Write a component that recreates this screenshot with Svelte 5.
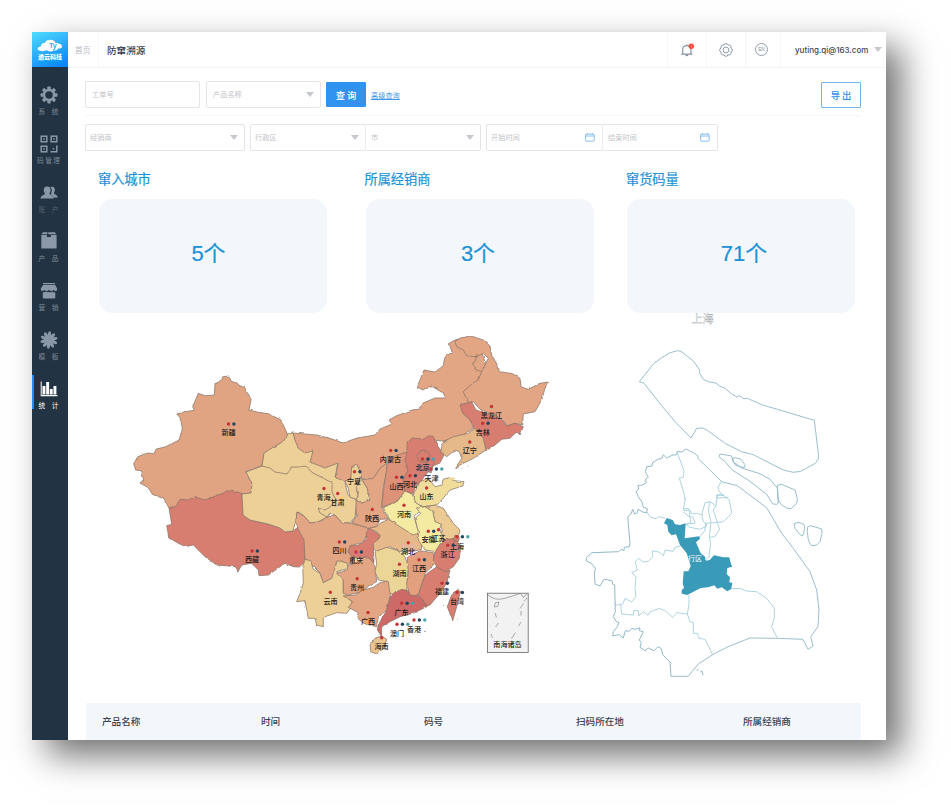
<script>
  // Outlines are kept in thirds of a pixel, relative to the tile origin [ox, oy].
  const W = [125, 365], N = [280, 420], S = [280, 530], NE = [400, 330], E = [400, 460], P = null;
  const path = (o, s, close = true) => {
    const n = s.trim().split(/[\s,]+/).map(Number);
    let d = '';
    for (let i = 0; i < n.length; i += 2) {
      const x = o ? o[0] + n[i] / 3 : n[i];
      const y = o ? o[1] + n[i + 1] / 3 : n[i + 1];
      d += (i ? 'L' : 'M') + x.toFixed(1) + ' ' + y.toFixed(1);
    }
    return d + (close ? 'Z' : '');
  };
  const provinces = [
    [P, '#e2a684', '448,344 455,340 465,338 480,345 490,380 468,403 461,405 463,413 470,420 474,428 460,437 443,441 432,440 412,440 408,446 408,454 398,456 387,464 380,469 374,479 365,480 357,474 352,478 343,482 335,479 338,464 325,469 309,463 312,452 305,454 297,449 293,433 305,434 317,435 332,439 343,443 357,438 375,435 380,429 392,424 389,420 396,416 412,410 420,409 423,403 435,398 446,398 443,393 433,387 428,387 423,390 417,387 424,370 435,372 443,366 445,357 452,352 450,346'],
    [W, '#e0a482', '293,35 312,33 318,48 335,55 345,62 360,68 366,82 379,100 372,135 400,142 430,146 468,165 487,206 478,228 462,238 440,250 418,265 410,302 362,320 382,358 378,385 350,387 320,378 285,390 240,407 208,397 190,407 165,405 152,430 132,430 118,402 82,388 70,368 46,355 56,348 50,318 32,315 26,296 38,275 68,264 86,266 94,252 120,246 162,225 172,190 165,158 155,147 180,140 208,136 203,125 220,85 240,92 268,90 270,55 290,45'],
    [W, '#d77e71', '350,385 320,376 285,388 240,405 208,395 190,405 165,403 152,428 132,430 140,478 125,482 132,520 180,545 205,540 240,575 275,600 335,605 338,622 350,600 380,595 400,615 402,632 430,630 480,595 505,605 523,606 540,590 540,525 520,485 505,498 480,500 465,488 430,478 375,465 355,450'],
    [P, '#ecd097', '262,466 246,472 252,484 251,493 242,494 243,515 250,520 268,524 280,528 285,532 293,531 296,520 297,512 300,513 305,517 310,523 318,522 327,518 340,500 332,480 305,462 285,462'],
    [P, '#ecd097', '287,434 284,441 279,444 272,448 264,453 262,466 270,468 275,472 287,474 292,467 300,467 305,466 313,473 323,478 332,483 332,492 336,500 330,507 325,510 318,508 320,513 327,517 330,513 335,515 342,523 350,523 355,517 357,500 348,495 345,482 335,477 338,463 325,468 310,462 313,451 305,453 298,448 295,440 293,433'],
    [N, '#ecd097', '215,140 230,132 238,150 245,165 240,195 230,210 235,230 228,238 210,232 205,205 195,183 212,178'],
    [N, '#ecd097', '240,170 262,205 270,240 245,250 228,240 235,225 230,210'],
    [N, '#e2a684', '320,130 300,145 280,175 255,178 246,178 262,205 270,240 245,250 228,240 228,290 215,308 265,325 290,320 300,298 325,297 305,260 310,200 322,150'],
    [N, '#dd9379', '385,95 350,105 322,135 312,200 305,262 350,245 375,215 370,180 385,150 382,120'],
    [P, '#e2a684', '296,520 297,512 305,517 310,523 318,522 325,518 335,515 342,523 350,523 357,525 368,528 367,537 360,543 350,546 348,552 355,558 347,565 341,561 336,563 335,577 323,583 320,573 310,563 305,560 304,540 298,529'],
    [S, '#ecd097', '75,88 92,92 100,118 120,130 130,158 155,145 172,92 200,98 205,115 170,125 190,150 190,185 215,210 215,230 200,250 170,248 150,255 130,262 130,290 110,285 105,265 85,265 80,240 75,212 50,215 60,190 70,160 68,110'],
    [S, '#e2a684', '205,105 230,100 245,85 262,80 275,90 285,110 290,155 270,165 245,185 205,195 190,190 190,150 170,130 200,120'],
    [S, '#e2a684', '190,198 225,195 250,180 280,172 300,158 325,152 335,175 330,200 320,240 295,262 290,290 250,280 230,262 235,248 205,232 218,215'],
    [N, '#e6b98a', '300,310 325,298 360,318 400,325 425,358 425,388 395,395 360,395 330,380 290,395 270,375 300,350 290,335 265,325 290,320'],
    [S, '#d77e71', '268,-5 300,15 298,25 280,40 282,98 262,80 240,85 215,80 205,65 210,48 235,45 262,25 258,10'],
    [S, '#ecd697', '285,65 320,52 355,62 375,80 385,110 380,180 345,195 330,190 325,155 295,150 285,125 290,100'],
    [P, '#d77e71', '407,452 407,443 412,438 424,439 428,436 433,436 437,445 444,455 440,463 433,466 428,472 422,480 415,488 413,494 405,491 403,480 408,470 405,460'],
    [NE, '#d77e71', '50,380 60,362 75,360 92,375 85,392 60,395'],
    [NE, '#d77e71', '88,388 102,393 98,410 94,428 84,425 80,400'],
    [E, '#f1dd9b', '40,105 60,65 85,55 105,80 125,75 130,58 145,53 165,62 192,65 188,78 150,90 125,120 110,135 70,140 45,130'],
    [P, '#f4eaa1', '383,507 397,502 405,491 412,494 416,503 424,508 414,516 417,527 419,533 413,535 402,528 390,520'],
    [E, '#ebca93', '70,142 105,135 130,145 160,190 180,210 175,230 150,240 130,240 125,200 105,185 98,155'],
    [E, '#f4eaa1', '50,145 75,140 98,155 105,185 125,193 118,203 128,225 126,245 110,275 75,270 55,240 55,215 45,175 62,160'],
    [NE, '#e2a684', '180,24 212,18 250,30 270,48 275,75 295,110 298,125 335,130 360,145 363,170 385,178 420,160 445,156 435,175 425,210 405,245 370,252 368,285 345,280 322,288 308,270 290,258 240,238 220,215 205,218 190,185 218,160 235,150 245,125 265,85 250,70 230,80 200,78 190,60 170,50 165,35'],
    [NE, '#d77e71', '180,225 205,218 215,215 228,240 290,260 310,275 320,288 345,280 370,290 360,315 350,305 330,325 305,328 285,345 258,362 245,320 225,295 210,270 188,250'],
    [NE, '#e6b98a', '125,350 130,335 160,320 205,310 225,295 250,325 258,360 220,385 180,405 165,415 185,385 178,365 165,360 140,380 122,365'],
    [E, '#e2a07f', '22,292 60,272 100,278 105,310 75,340 55,405 30,410 20,370 25,340'],
    [E, '#d77e71', '105,275 128,240 165,235 182,262 178,295 160,320 135,335 112,325 100,300'],
    [E, '#d77e71', '110,320 135,335 150,330 140,370 120,400 90,435 75,440 55,405 75,345'],
    [S, '#cd6a67', '340,190 365,178 385,182 390,195 415,198 430,210 440,230 400,250 360,260 330,275 305,290 305,320 292,300 295,285 320,240 330,205'],
    [S, '#ebc48f', '270,345 285,325 305,318 320,328 312,355 290,372 272,365'],
    [E, '#d77e71', '175,388 180,400 170,440 158,482 142,440 155,405'],
    [E, '#d77e71', '165,225 180,230 175,245 160,240']
  ].map(([o, fill, s]) => ({ fill, d: path(o, s) }));
  const innerLine = path(NE, '232,72 225,95 218,103 225,118 245,125', false);

  // name, centre x, centre y, first dot x, dot y, number of dots
  const labels = [
    ['新疆', 228.5, 433, 228.5, 424, 2], ['西藏', 252, 560, 252, 551, 2], ['内蒙古', 390.5, 460, 390.7, 450.5, 2],
    ['宁夏', 354, 481.5, 354.5, 471.8, 2], ['青海', 323.5, 497.5, 324, 488.5, 1], ['甘肃', 337.5, 502.5, 337.7, 493.5, 1],
    ['陕西', 372, 519, 372.3, 509.5, 1], ['山西', 396.5, 486.5, 396.5, 477.3, 2], ['河北', 410, 484.5, 410, 475.7, 2],
    ['河南', 404, 514.5, 404, 505.3, 1], ['四川', 339.5, 551, 339.3, 542, 2], ['重庆', 356, 561, 356, 552, 2],
    ['贵州', 357, 588, 357.2, 578.8, 1], ['云南', 330.5, 602, 330.3, 592.3, 1], ['广西', 368, 621.5, 368, 612.5, 1],
    ['广东', 401.5, 612.5, 401.7, 603.3, 3], ['澳门', 397, 633.5, 397, 624.3, 3], ['香港', 414, 629.5, 414, 620, 3],
    ['海南', 381.5, 646.5, 381.7, 637.7, 1], ['湖南', 399.5, 573.5, 399.5, 564.2, 1], ['江西', 419, 569, 419, 559.8, 2],
    ['湖北', 408, 552, 408.3, 542.7, 1], ['黑龙江', 491.5, 415.5, 491.5, 406.5, 1], ['吉林', 482.7, 432.3, 482.7, 423.3, 2],
    ['辽宁', 469.8, 451, 469.8, 442, 1], ['北京', 422.5, 468, 422.5, 459, 3], ['天津', 431.5, 478.3, 431, 469, 3],
    ['山东', 426.5, 497, 426.6, 488, 1], ['安徽', 428.5, 540, 428.3, 531.3, 2], ['江苏', 438.5, 539, 438.5, 529.7, 1],
    ['上海', 457, 546.5, 457, 536.8, 3], ['浙江', 447.7, 554.3, 447.8, 545.3, 2], ['福建', 442, 592, 442, 583.3, 2],
    ['台湾', 457, 601.5, 457, 592.5, 2]
  ];
  const dotColors = ['#c73434', '#24435c', '#4aa3a8'];

  const A = [580, 310], B = [580, 490];
  const coast = [
    path(A, '178,215 222,160 245,143 270,128 293,122 303,124 340,153 359,180 359,190 370,208 388,216 408,219 420,229 435,235 455,252 470,260 478,257 492,266 502,265 545,284 703,331 715,430 715,447 706,460 662,484 640,487 610,480 520,434 485,425 437,401 382,361 368,354 350,355 333,384 285,335 245,287 192,220'),
    path(A, '456,447 466,443 482,447 495,464 494,472 482,471 466,465'),
    path(A, '571,570 560,553 510,514 457,480 435,455 417,440 420,432 455,438 460,456 485,474 540,491 570,508 592,534 595,580 590,583 578,582'),
    path(A, '592,526 605,523 645,540 652,565 650,580 633,596 622,595 605,585 595,570'),
    path(B, '643,101 654,97 672,103 674,116 668,138 660,134 645,115'),
    path(B, '683,110 692,107 725,117 726,130 720,155 710,165 694,167 685,150 682,125'),
    path(A, '318,417 340,428 353,437 355,446 425,515 472,527 560,593 605,670 640,715 690,785 710,840 717,900 714,950 692,980 699,1008 684,1018 668,988 592,985 510,984 440,1012 398,1034 355,1062 325,1099 273,1099', false)
  ];
  const westBorder = path(A, '273,1099 270,1056 248,1034 244,1016 234,1010 222,1022 205,1014 195,1022 180,1012 184,998 178,990 190,965 178,962 180,954 165,958 155,955 148,964 136,962 130,984 118,974 98,978 100,965 112,950 117,938 108,934 100,920 106,905 104,825 98,823 96,812 72,808 60,828 45,822 43,792 46,775 34,760 18,752 20,742 36,728 115,725 124,718 132,722 133,712 148,710 150,700 143,620 153,612 158,598 164,612 172,608 174,598 188,606 200,608 202,596 190,592 186,576 176,562 168,545 176,538 174,526 185,526 200,518 195,510 205,502 196,485 200,470 216,468 218,458 235,447 245,446 250,434 260,444 275,436 290,434 292,424 305,426 318,417', false);
  const inner = [
    path(A, '292,428 300,450 312,482 310,502 298,505 312,550 316,570', false),
    path(A, '316,565 310,600 330,602 328,620 340,622 345,640 320,642', false),
    path(A, '425,513 414,532 418,545 432,557 410,555 410,565 445,562', false),
    path(B, '200,66 212,82 228,86 235,80 256,84', false),
    path(B, '310,58 325,55 335,72 350,70 365,75 375,38 390,35 408,48 412,15 425,12 448,30 455,70 430,95 400,98 378,100 380,108 360,118 330,112 318,103 333,98 330,82 308,65', false),
    path(B, '365,72 370,95 378,100 374,122 360,140', false),
    path(B, '408,48 400,60 412,98 419,118 404,140 388,142 392,160 386,205', false),
    path(B, '390,35 385,60 393,97 388,142', false),
    path(B, '303,167 285,172 280,184 255,180 250,198 240,187 217,182 218,200 205,214 190,216 175,205 166,215 172,240 155,248 168,260 165,295 168,320 155,336 135,325 130,340 122,345 125,372 160,375 162,360 175,362 176,378 190,365 204,376 210,366 238,355 255,362 278,382 290,368 322,372', false),
    path(B, '327,315 327,345 322,372 330,395 340,397 340,430 352,430 357,445 375,448 398,494', false),
    path(B, '455,296 480,295 500,303 530,305 560,325 583,355 583,385 575,410 591,443', false),
    path(B, '104,338 110,346 124,342', false)
  ];
  const minhang = path(B, '260,84 278,90 285,103 300,105 317,100 314,145 358,139 360,146 348,157 362,190 375,200 378,212 389,210 402,196 430,202 448,202 453,222 457,230 442,234 440,252 450,262 448,277 457,278 454,297 442,304 425,292 412,296 403,286 385,292 362,294 322,315 305,311 305,300 312,294 308,280 311,244 325,244 332,228 320,190 300,165 288,133 275,136 265,125 262,105 252,100');

  const menu = [
    { icon: 'gear', text: '系　统' }, { icon: 'qr', text: '码 管 理' }, { icon: 'users', text: '账　户', dim: true },
    { icon: 'box', text: '产　品' }, { icon: 'shop', text: '营　销' }, { icon: 'flower', text: '模　板' },
    { icon: 'chart', text: '统　计', active: true }
  ];
  const stats = [['窜入城市', '5', 9], ['所属经销商', '3', 3], ['窜货码量', '71', -6]];
  const columns = [['产品名称', 159], ['时间', 163], ['码号', 152], ['扫码所在地', 167], ['所属经销商', 100]];
</script>

{#snippet caret()}<i class="caret"></i>{/snippet}
{#snippet calendar()}
  <svg class="cal" width="10" height="9" viewBox="0 0 10 9" fill="none" stroke="#7db8ee"><rect x=".6" y="1.1" width="8.6" height="7" rx=".5" stroke-width=".9" /><path d="M.6 3h8.6M2.5 0v1.5M7.3 0v1.5" stroke-width=".9" /></svg>
{/snippet}

<div class="stage">
  <div class="window">
    <aside>
      <div class="logo">
        <svg width="26" height="14" viewBox="0 0 26 14"><path d="M3 11.8C-.5 11.5 0 7.5 4 7.4 3.8 4.8 6 3.500 7.800 4 9-.3 17-.6 18.500 4c4 .2 7.500 2 6.300 4.200-.7 1.500-2.800 1.200-4 1.200.2 2-2.600 2.700-4.200 1.500-1 2-5.500 2-7 .2-1.800 1.300-4.500 1.300-6.600.7Z" fill="#fff" /><text x="12" y="8.600" font-size="7" font-weight="700" fill="#26a4f4" font-family="Liberation Sans, sans-serif">Ty</text></svg>
        <span>透云科技</span>
      </div>
      {#each menu as m}
        <div class="item" class:active={m.active} class:dim={m.dim}>
          <svg width="18" height="20" viewBox="0 0 18 20" fill="currentColor">
            {#if m.icon === 'gear'}
              <circle cx="9" cy="10" r="5" fill="none" stroke="currentColor" stroke-width="2.500" />
              {#each [0, 45, 90, 135, 180, 225, 270, 315] as a}<rect x="7.300" y="1.500" width="3.400" height="3.500" rx=".8" transform="rotate({a} 9 10)" />{/each}
            {:else if m.icon === 'qr'}
              <g fill="none" stroke="currentColor" stroke-width="1.500"><rect x="1.200" y="2.200" width="5.600" height="5.600" /><rect x="11.200" y="2.200" width="5.600" height="5.600" /><rect x="1.200" y="12.200" width="5.600" height="5.600" /><path d="M16.800 11.500v6.300h-6.300" /></g>
              <path d="M3.200 4.200h1.600v1.600H3.200zM13.200 4.200h1.600v1.600h-1.600zM3.200 14.200h1.600v1.600H3.200zM12.600 14h1.600v1.600h-1.600z" />
            {:else if m.icon === 'users'}
              <path d="M10.500 4c3-1.200 5 1 4.300 4-.3 1.400-1.300 2-.8 2.600.8 1 3.500 1.400 3.800 4h-4.300c-.5-2-2-2.700-3-3.300 1.500-2 2-5 0-7.300Z" /><path d="M7.200 3.600c2.600 0 3.800 2 3.300 4.300-.3 1.500-1.400 2.300-1 3 .7 1.100 4 1.300 4.300 4.700H.5c.3-3.400 3.600-3.600 4.300-4.700.4-.7-.7-1.500-1-3-.5-2.300.8-4.300 3.400-4.300Z" />
            {:else if m.icon === 'box'}
              <path d="M3 .2h4.600l-.4 2.100H1.400ZM8.400.2h6.400l1.600 2.100H8.200ZM1.300 3h5.600v1.900h4V3h5.700v13q0 .6-.6.6H2q-.7 0-.7-.6Z" />
            {:else if m.icon === 'shop'}
              <path d="M3 2h12v1.300H3zM3 4h12.200l2 3.800q.2 2.200-1.500 2.200-1.400 0-1.900-1.300-.7 1.300-2.300 1.300T9 8.700Q8.200 10 6.600 10T4.200 8.700Q3.600 10 2.300 10 .6 10 .8 7.800ZM2.800 11.200q2 .3 3.300-.7Q8 12 9 10.700q1.500 1.200 3 0 1.500.9 3.300.6v5.400q0 .8-.8.800H3.600q-.8 0-.8-.8Z" />
            {:else if m.icon === 'flower'}
              {#each Array(10) as _, i}<ellipse cx="9" cy="4.900" rx="1.600" ry="3.600" transform="rotate({i * 36 + 5} 9 10)" />{/each}
              <path d="M9 7.500 11.400 9.500 10.500 12.300H7.500L6.600 9.500Z" />
            {:else}
              <path d="M.7 2.500h1V16h15.800v1.200H.7ZM2.500 7h2.900v8.500H2.500zM6.200 3h2.900v12.500H6.200zM9.800 10h2.900v5.500H9.800zM13.500 7h2.900v8.500h-2.900z" />
            {/if}
          </svg>
          <span>{m.text}</span>
        </div>
      {/each}
    </aside>
    <main>
      <header>
        <span class="home">首页</span><span class="title">防窜溯源</span>
        <div class="cell"><svg width="16" height="16" viewBox="0 0 16 16" fill="none" stroke="#8795a5" stroke-width="1.200"><path d="M2.300 12.200h11M3.700 12V7.800q0-4.200 4.100-4.200T11.900 7.800V12M7.800 3.600V2.400M6.600 12.500q1.200 2.400 2.400 0" /><circle cx="12.300" cy="4.300" r="2.700" fill="#ff4438" stroke="none" /><path d="M12.300 3v2.500" stroke="#ffb0a8" stroke-width=".7" /></svg></div>
        <div class="cell"><svg width="14" height="14" viewBox="0 0 14 14" fill="none" stroke="#8f9daa"><path d="M5.600.9Q7 .2 8.400.9L9 2.200 10.500 1.900Q12 2.500 12.100 3.900L11.700 5 13.100 5.900Q13.600 7.300 13 8.500L11.700 9.100 12 10.500Q11.500 12 10.100 12L8.900 11.700 8.300 13Q7 13.600 5.700 13L5.100 11.700 3.900 12Q2.500 11.800 2 10.500L2.300 9.100 1 8.500Q.4 7.300.9 5.900L2.300 5 1.900 3.900Q2.300 2.300 3.700 1.900L5 2.200Z" stroke-width="1" stroke-linejoin="round" /><circle cx="7" cy="7" r="2.900" /></svg></div>
        <div class="cell en"><b>EN</b></div>
        <div class="user">yuting.qi@163.com{@render caret()}</div>
      </header>
      <section class="filters">
        <div class="row first">
          <div class="input w115">工单号</div>
          <div class="input w115 gap">产品名称{@render caret()}</div>
          <button class="query">查 询</button>
          <a href="#more">高级查询</a>
          <button class="export">导 出</button>
        </div>
        <div class="row second">
          <div class="input" style:width="160px">经销商{@render caret()}</div>
          <div class="input next" style:width="116px">行政区{@render caret()}</div>
          <div class="input join" style:width="116px">市{@render caret()}</div>
          <div class="input next" style:width="117px">开始时间{@render calendar()}</div>
          <div class="input join" style:width="116px">结束时间{@render calendar()}</div>
        </div>
      </section>
      <section class="stats">
        {#each stats as [name, value, inset]}
          <div class="stat"><h2>{name}</h2><div class="card"><span style:margin-right="{inset}px">{value}个</span></div></div>
        {/each}
      </section>
      <svg class="maps" width="818" height="391" viewBox="68 312 818 391">
        <defs>
          <filter id="rough" x="0" y="0" width="100%" height="100%"><feTurbulence type="fractalNoise" baseFrequency="0.2" numOctaves="1" seed="4" /><feDisplacementMap in="SourceGraphic" scale="2.600" xChannelSelector="R" yChannelSelector="G" /></filter>
        </defs>
        <g stroke="#8a7467" stroke-width=".75" stroke-linejoin="round" filter="url(#rough)">
          {#each provinces as p}<path d={p.d} fill={p.fill} />{/each}
          <path d={innerLine} fill="none" />
        </g>
        <g fill="#99968c"><circle cx="425" cy="631.500" r=".8" /><circle cx="443.500" cy="605.500" r=".6" /><circle cx="468" cy="466" r=".5" /><circle cx="462" cy="468" r=".5" /><circle cx="457.500" cy="619" r=".5" /><path d="M448 479l4-2 4 1.500-3 1.500Z" fill="#f1dd9b" /></g>
        <g fill="none" stroke="#777" stroke-width=".6">
          <rect x="487.500" y="593.200" width="40.700" height="59.300" fill="#f2f2f2" stroke="#666" stroke-width=".8" />
          <path d="M488 595q7 6 16 3.500t16-5M520.500 593.500l3 4 3.500-4M495 603l4-1-1.500 4.500-3 .5ZM495 613l1.500 4.500M498.500 623l-3 4M491 634l1.500 4M527 598l-3 3.500M523.500 603.500l-3.500 5M521 611v4.500M521 622l-2.500 4M515.500 632.500l-4 6" />
        </g>
        {#each labels as [name, x, y, dx, dy, n]}
          {#each dotColors.slice(0, n) as c, i}<circle cx={dx + i * 5.400} cy={dy} r="1.700" fill={c} />{/each}
          <text x={x} y={y + 2.400} class="place">{name}</text>
        {/each}
        <text x="507.500" y="646.800" class="place">南海诸岛</text>
        <g fill="none" stroke-linejoin="round" stroke-width=".9">
          {#each inner as d}<path {d} stroke="#a5cfdc" />{/each}
          {#each coast as d}<path {d} stroke="#8fb8c8" />{/each}
          <path d={westBorder} stroke="#86b2c2" />
          <path d="M697 671l1-2M700 672l2-1 1 4" stroke="#8fb8c8" />
        </g>
        <path d={minhang} fill="#3a9bb9" />
        <clipPath id="district"><path d={minhang} /></clipPath>
        <text x="691.500" y="561.300" class="place district" clip-path="url(#district)">闵行区</text>
        <circle cx="706.500" cy="558.500" r="1.500" fill="#d8eef5" />
        <text x="702.500" y="323" class="city">上海</text>
      </svg>
      <div class="table">
        {#each columns as [name, w]}<span style:width="{w}px">{name}</span>{/each}
      </div>
    </main>
  </div>
</div>

<style>
  :global(body) { background: #fff; }
  .stage { width: 951px; height: 805px; padding: 32px; box-sizing: border-box; overflow: hidden; background: #fff; font-family: "Noto Sans CJK SC", sans-serif; }
  .window { width: 854px; height: 708px; display: flex; background: #fff; box-shadow: 15px 15px 33px rgba(0, 0, 0, .57); }
  aside { width: 36px; flex: none; background: #223343; }
  .logo { height: 35px; margin-bottom: 3px; background: linear-gradient(155deg, #4edcfc, #0f85fb 90%); display: flex; flex-direction: column; align-items: center; color: #fff; }
  .logo svg { margin-top: 7px; flex: none; }
  .logo span { font-size: 6px; line-height: 8px; font-weight: 900; white-space: nowrap; }
  .item { height: 49px; padding-top: 15px; box-sizing: border-box; position: relative; display: flex; flex-direction: column; align-items: center; color: #8a98a7; }
  .item svg { flex: none; margin-right: 2px; }
  .item span { font-size: 6.700px; line-height: 10px; margin-top: 1px; white-space: nowrap; color: #7d8b98; padding-right: 3px; }
  .item.dim span { color: #55636f; }
  .item.active, .item.active span { color: #fff; }
  .item.active::before { content: ""; position: absolute; left: 0; top: 11px; width: 2px; height: 34px; background: #1890ff; }
  main { flex: 1; min-width: 0; display: flex; flex-direction: column; }
  header { height: 36px; box-sizing: border-box; border-bottom: 1px solid #f3f4f5; display: flex; align-items: stretch; line-height: 35px; }
  .home { width: 31px; box-sizing: border-box; border-right: 1px solid #f6f6f7; padding-left: 7px; font-size: 7.700px; color: #b6bbc2; }
  .title { flex: 1; padding-left: 8px; font-size: 9.600px; color: #36424f; line-height: 36px; font-weight: 500; }
  .cell { width: 39px; box-sizing: border-box; border-left: 1px solid #f5f6f7; display: flex; align-items: center; justify-content: center; }
  .cell.en { width: 35px; padding-right: 3px; }
  .en b { width: 13px; height: 13px; box-sizing: border-box; border: 1px solid #93a0ad; border-radius: 50%; font: 4.800px/11px "Liberation Sans", sans-serif; text-align: center; color: #8592a0; }
  .user { width: 106px; box-sizing: border-box; border-left: 1px solid #f5f6f7; padding: 0 4px 0 14px; display: flex; align-items: center; justify-content: space-between; font: 500 8px Inter, sans-serif; color: #3c4653; }
  .caret { border: 4px solid transparent; border-top: 5px solid #c5c9ce; border-bottom: 0; flex: none; }
  .filters { padding: 0 25px 0 17px; }
  .row { display: flex; align-items: center; }
  .first { height: 48px; padding-top: 6px; box-sizing: border-box; border-bottom: 1px solid #f6f7f8; }
  .second { padding-top: 8px; }
  .input { height: 27px; box-sizing: border-box; border: 1px solid #e3e5e8; border-radius: 2px; display: flex; align-items: center; justify-content: space-between; padding: 0 6px 1px 4px; font-size: 7.200px; color: #bfc3c8; flex: none; }
  .first .input { padding-left: 6px; }
  .w115 { width: 115px; }
  .gap { margin-left: 6px; }
  .next { margin-left: 5px; padding-left: 4px; }
  .join { margin-left: -1px; border-left-color: #eceef0; padding-left: 5px; }
  .cal { margin: 1px 1px 0 0; }
  button { font-family: inherit; padding: 0; border-radius: 1px; }
  .query { width: 40px; height: 25px; margin-left: 5px; border: 0; background: #3093ef; color: #fff; font-size: 9.300px; font-weight: 500; }
  a { margin-left: 5px; font-size: 7.200px; color: #3f97ea; }
  .export { width: 40px; height: 26px; margin-left: auto; border: 1px solid #72b5f3; background: #fff; color: #2f90ea; font-size: 9.300px; font-weight: 500; }
  .stats { display: flex; justify-content: space-between; padding: 18px 31px 0 31px; }
  .stat { width: 228px; }
  .stat:nth-child(2) { margin-left: 5px; }
  h2 { margin: 0 0 0 -1px; font-size: 13.200px; line-height: 20px; height: 30px; font-weight: 400; color: #1c92d6; -webkit-text-stroke: .2px #1c92d6; }
  .card { height: 114px; border-radius: 14px; background: #f3f7fb; color: #1c92d6; font: 22px/110px "Liberation Sans", "Noto Sans CJK SC", sans-serif; text-align: center; -webkit-text-stroke: .2px #1c92d6; }
  .maps { flex: none; display: block; margin-top: -1px; }
  .place { font-size: 7.100px; text-anchor: middle; fill: #1d1a1a; font-weight: 500; }
  .district { fill: #fff; font-weight: 400; }
  .city { font-size: 11px; text-anchor: middle; fill: #fff; stroke: #a6aab0; stroke-width: .35px; }
  .table { height: 37px; margin: 0 25px 0 18px; padding: 0 0 2px 16px; box-sizing: border-box; background: #f3f7fb; display: flex; align-items: center; font-size: 9.600px; font-weight: 500; color: #36424f; }
  .table span { flex: none; white-space: nowrap; }
</style>
